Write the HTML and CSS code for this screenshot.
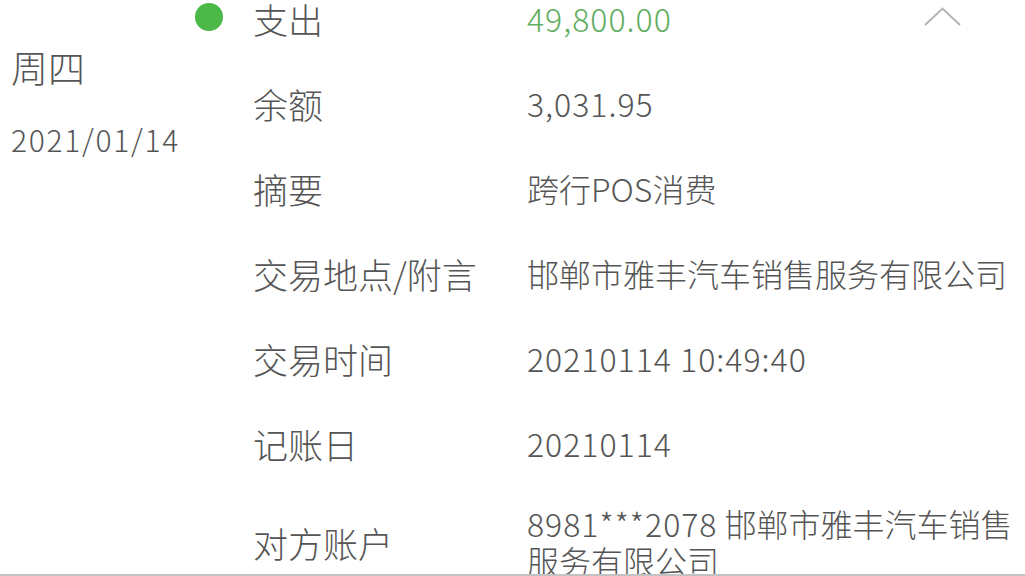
FILE: index.html
```html
<!DOCTYPE html>
<html lang="zh-CN">
<head>
  <meta charset="UTF-8" />
  <meta name="viewport" content="width=device-width, initial-scale=1.0"/>
  <title>交易明细</title>
  <link rel="stylesheet" href="styles.css">
</head>
<body>

<!-- Transaction detail -->
<div class="record">
  <div class="day">
    <div class="weekday">周四</div>
    <div class="date">2021/01/14</div>
  </div>

  <div class="detail">
    <div class="row">
      <span class="dot"></span>
      <div class="label">支出</div>
      <div class="value amount num">49,800.00</div>
      <svg class="toggle" width="37" height="19" viewBox="0 0 37 19">
        <polyline points="1,18 18.5,1.5 36,18" fill="none" stroke="#b4b4b4" stroke-width="2"/>
      </svg>
    </div>
    <div class="row">
      <span class="dot-space"></span>
      <div class="label">余额</div>
      <div class="value num">3,031.95</div>
    </div>
    <div class="row">
      <span class="dot-space"></span>
      <div class="label">摘要</div>
      <div class="value">跨行POS消费</div>
    </div>
    <div class="row">
      <span class="dot-space"></span>
      <div class="label">交易地点/附言</div>
      <div class="value">邯郸市雅丰汽车销售服务有限公司</div>
    </div>
    <div class="row">
      <span class="dot-space"></span>
      <div class="label">交易时间</div>
      <div class="value num">20210114 10:49:40</div>
    </div>
    <div class="row">
      <span class="dot-space"></span>
      <div class="label">记账日</div>
      <div class="value num">20210114</div>
    </div>
    <div class="row row-last">
      <span class="dot-space"></span>
      <div class="label">对方账户</div>
      <div class="value"><span class="num">8981***2078</span> 邯郸市雅丰汽车销售服务有限公司</div>
    </div>
  </div>
</div>

<div class="divider"></div>

</body>
</html>
```

FILE: styles.css
```css
body {
  font-family: "Noto Sans CJK SC", "Noto Sans", sans-serif;
  font-weight: 300;
  background: #fff;
  color: #555;
  margin: 0;
  padding: 0;
  height: 576px;
  overflow: hidden;
  position: relative;
}

.record {
  display: flex;
  margin-top: -24px;
}

.day {
  width: 195px;
  padding-left: 11px;
  padding-top: 69px;
  box-sizing: border-box;
}

.weekday {
  font-size: 37px;
  line-height: 44px;
}

.date {
  font-size: 30px;
  line-height: 40px;
  margin-top: 30px;
  letter-spacing: 1.7px;
}

.detail {
  flex: 1;
}

.row {
  display: flex;
  align-items: center;
  padding: 24px 0;
  position: relative;
}

.row-last {
  padding-top: 19px;
}

.dot, .dot-space {
  width: 28px;
  height: 28px;
  flex-shrink: 0;
  margin-right: 30px;
}

.dot {
  background: #4cb848;
  border-radius: 50%;
  margin-top: -4px;
}

.label {
  width: 274px;
  flex-shrink: 0;
  font-size: 35px;
  line-height: 37px;
}

.value {
  font-size: 32px;
  line-height: 37px;
  padding-right: 12px;
}

.num {
  letter-spacing: 1px;
}

.amount {
  color: #62ad62;
}

.toggle {
  position: absolute;
  left: 729px;
  top: 31px;
}

.divider {
  position: absolute;
  left: 0;
  right: 0;
  bottom: 0;
  height: 2px;
  background: #c2c2c2;
}
```
